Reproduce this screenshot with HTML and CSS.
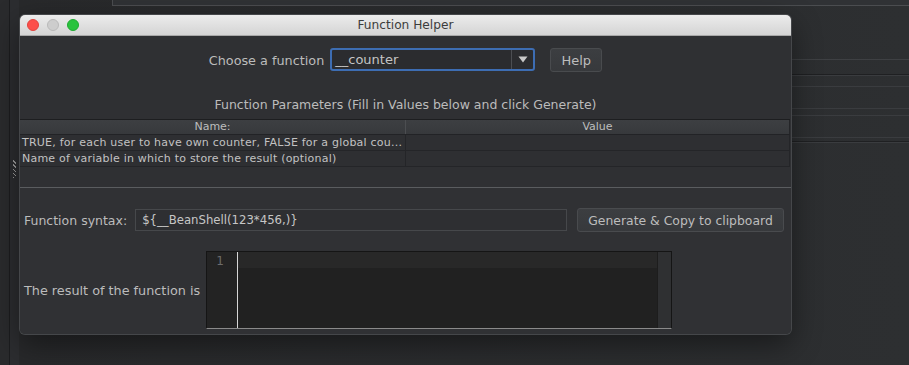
FILE: index.html
```html
<!DOCTYPE html>
<html>
<head>
<meta charset="utf-8">
<title>Function Helper</title>
<link rel="stylesheet" href="styles.css">
</head>
<body>
<div class="app">
  <div class="side"></div>
  <div class="side-line"></div>
  <div class="split"><div class="grip"></div></div>
  <div class="main">
    <div class="top"><div class="topfield"></div></div>
    <div class="rule r1"></div>
    <div class="rule r2"></div>
    <div class="rule r3"></div>
    <div class="rule r4"></div>
    <div class="rule r5"></div>
    <div class="rule r6"></div>
    <div class="rule r7"></div>
    <div class="rule r8"></div>
    <div class="rule r9"></div>
  </div>
</div>

<div class="dialog">
  <div class="titlebar">
    <div class="lights">
      <span class="light red"></span>
      <span class="light grey"></span>
      <span class="light green"></span>
    </div>
    <div class="title">Function Helper</div>
    <div></div>
  </div>

  <div class="upper">
    <div class="choose-row">
      <span class="lbl">Choose a function</span>
      <div class="combo">
        <span class="combo-text">__counter</span>
        <span class="combo-arrow">
          <svg width="10" height="7" viewBox="0 0 10 7"><path d="M0.5 0.5 L9.5 0.5 L5 6.5 Z" fill="#c9c9c9"/></svg>
        </span>
      </div>
      <div class="btn help">Help</div>
    </div>
    <div class="params-title">Function Parameters (Fill in Values below and click Generate)</div>
    <div class="table">
      <div class="thead">
        <div class="th c1">Name:</div>
        <div class="th c2">Value</div>
      </div>
      <div class="tr">
        <div class="td c1">TRUE, for each user to have own counter, FALSE for a global cou...</div>
        <div class="td c2"></div>
      </div>
      <div class="tr">
        <div class="td c1">Name of variable in which to store the result (optional)</div>
        <div class="td c2"></div>
      </div>
    </div>
  </div>

  <div class="lower">
    <div class="syntax-row">
      <span class="lbl">Function syntax:</span>
      <div class="field">${__BeanShell(123*456,)}</div>
      <div class="btn gen">Generate &amp; Copy to clipboard</div>
    </div>
    <div class="result-row">
      <span class="lbl result-lbl">The result of the function is</span>
      <div class="editor">
        <div class="gutter"><span class="lineno">1</span></div>
        <div class="code"><div class="curline"></div></div>
        <div class="vscroll"></div>
      </div>
    </div>
  </div>
</div>
</body>
</html>
```

FILE: styles.css
```css
html, body {
  margin: 0;
  padding: 0;
}
body {
  width: 909px;
  height: 365px;
  overflow: hidden;
  position: relative;
  background: #2b2c2e;
  font-family: "DejaVu Sans", "Liberation Sans", sans-serif;
}

/* background application */
.app {
  display: flex;
  height: 365px;
}
.side {
  width: 9px;
  background: #2a2b2d;
}
.side-line {
  width: 1px;
  background: #1c1d1f;
}
.split {
  width: 9px;
  background: #2c2d30;
  padding-top: 160px;
  box-sizing: border-box;
}
.grip {
  width: 3px;
  height: 18px;
  margin-left: 3px;
  background: repeating-linear-gradient(45deg, #9c9c9c 0 1px, transparent 1px 3px);
}
.main {
  flex: 1;
  display: flex;
  flex-direction: column;
  background: linear-gradient(90deg, #28292b 0%, #2d2f31 100%);
}
.top {
  height: 6px;
  display: flex;
}
.topfield {
  margin-left: 93px;
  flex: 1;
  background: #303235;
  border-left: 1px solid #4b4d50;
  border-bottom: 1px solid #4b4d50;
}
.rule {
  height: 1px;
  background: #3b3d40;
}
.r1 { margin-top: 53px; background: #3e4043; }
.r2 { margin-top: 14px; background: #1f2022; }
.r3 { background: #3a3c3f; }
.r4 { margin-top: 10px; background: #3a3c3f; }
.r5 { margin-top: 21px; background: #3a3c3f; }
.r6 { margin-top: 6px; background: #3a3c3f; }
.r7 { margin-top: 21px; background: #3a3c3f; }
.r8 { margin-top: 3px; background: #1f2022; }
.r9 { background: #3a3c3f; }

/* dialog window */
.dialog {
  position: absolute;
  left: 20px;
  top: 15px;
  width: 771px;
  height: 319px;
  background: #2f3033;
  border-radius: 5px;
  box-shadow: 0 0 0 1px #45474a, 0 10px 30px rgba(0, 0, 0, 0.45);
  display: flex;
  flex-direction: column;
  overflow: hidden;
}
.titlebar {
  height: 20px;
  flex: none;
  border-bottom: 1px solid #a8a8a8;
  background: linear-gradient(#ececec, #d4d4d4);
  display: grid;
  grid-template-columns: 1fr auto 1fr;
  align-items: center;
}
.lights {
  display: flex;
  gap: 8px;
  padding-left: 7px;
}
.light {
  width: 12px;
  height: 12px;
  border-radius: 50%;
  box-sizing: border-box;
}
.red { background: #fc4f4a; border: 1px solid #e0443e; }
.grey { background: #cdcdcd; border: 1px solid #b9b9b9; }
.green { background: #2ac33e; border: 1px solid #1eaa31; }
.title {
  font-size: 12.2px;
  color: #3c3c3c;
  line-height: 16px;
}

.lbl {
  font-size: 12.5px;
  color: #bcbcbc;
  white-space: nowrap;
}
.choose-row .lbl {
  font-size: 12.8px;
}
.result-lbl {
  font-size: 12.8px;
}

.upper {
  height: 151px;
  flex: none;
  display: flex;
  flex-direction: column;
}
.choose-row {
  margin-top: 12px;
  height: 24px;
  display: flex;
  align-items: center;
  justify-content: center;
}
.combo {
  margin-left: 6px;
  width: 205px;
  height: 23px;
  box-sizing: border-box;
  border: 2px solid #3d6db3;
  border-radius: 3px;
  background: #2b2c2f;
  display: flex;
  align-self: flex-start;
}
.combo-text {
  flex: 1;
  font-size: 13px;
  color: #c4c4c4;
  line-height: 19px;
  padding-left: 3px;
}
.combo-arrow {
  width: 21px;
  border-left: 1px solid #4c4e52;
  display: flex;
  align-items: center;
  justify-content: center;
}
.btn {
  box-sizing: border-box;
  height: 24px;
  border: 1px solid #494b4e;
  border-radius: 3px;
  background: linear-gradient(#3c3e41, #37393c);
  color: #bdbdbd;
  font-size: 12.4px;
  display: flex;
  align-items: center;
  justify-content: center;
}
.help {
  margin-left: 15px;
  width: 52px;
  font-size: 13px;
}
.params-title {
  margin-top: 25px;
  line-height: 16px;
  height: 16px;
  text-align: center;
  font-size: 12.5px;
  color: #bcbcbc;
}
.table {
  margin-top: 6px;
  width: 770px;
  border-top: 1px solid #1d1e20;
  background: #2e2f32;
}
.thead, .tr {
  display: flex;
}
.thead {
  height: 14px;
  border-bottom: 1px solid #222326;
  background: linear-gradient(#3d3f42, #37393c);
}
.tr {
  height: 15px;
  border-bottom: 1px solid #242528;
}
.c1 {
  width: 385px;
  border-right: 1px solid #242528;
}
.c2 {
  flex: 1;
  border-right: 1px solid #242528;
}
.th {
  font-size: 11px;
  line-height: 14px;
  color: #bdbdbd;
  text-align: center;
}
.th.c1 {
  border-right-color: #4c4e51;
}
.td {
  font-size: 11px;
  letter-spacing: 0.22px;
  line-height: 15px;
  color: #c2c2c2;
  padding-left: 2px;
  white-space: nowrap;
  box-sizing: border-box;
}
.td.c1 {
  width: 386px;
}

.lower {
  flex: 1;
  border-top: 1px solid #5a5c5f;
  padding: 20px 7px 5px 4px;
  display: flex;
  flex-direction: column;
  background: #303134;
}
.syntax-row {
  height: 24px;
  display: flex;
  align-items: center;
}
.field {
  margin-left: 8px;
  width: 432px;
  height: 22px;
  box-sizing: border-box;
  border: 1px solid #46484b;
  background: #2e2f32;
  font-size: 11.7px;
  color: #c6c6c6;
  line-height: 20px;
  padding-left: 6px;
}
.gen {
  margin-left: 10px;
  width: 207px;
}
.result-row {
  margin-top: 19px;
  height: 78px;
  display: flex;
  align-items: center;
}
.editor {
  margin-left: 6px;
  width: 466px;
  height: 78px;
  box-sizing: border-box;
  border: 1px solid #151515;
  border-bottom: 1px solid #8a8a8a;
  display: flex;
  background: #212121;
}
.gutter {
  width: 30px;
  background: #232323;
  border-right: 1px solid #d6d6d6;
  text-align: center;
}
.lineno {
  font-size: 12px;
  color: #6c6c6c;
  line-height: 17px;
  display: block;
  padding-top: 1px;
  padding-right: 4px;
}
.code {
  flex: 1;
  background: #212121;
}
.curline {
  height: 16px;
  background: #282828;
}
.vscroll {
  width: 13px;
  background: #2f3032;
  border-left: 1px solid #1d1d1d;
}
```
